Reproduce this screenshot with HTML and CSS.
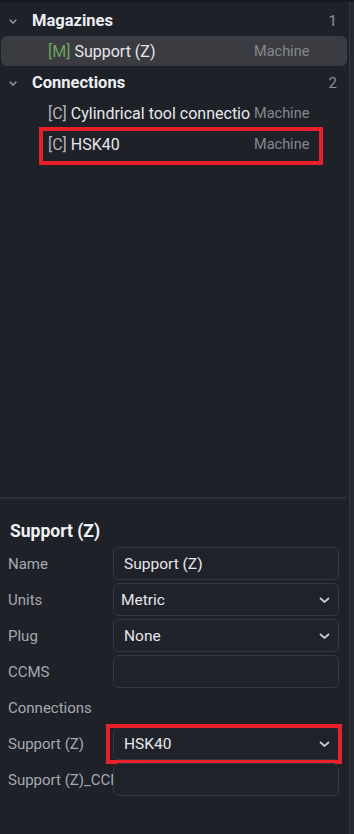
FILE: index.html
```html
<!DOCTYPE html>
<html>
<head>
<meta charset="utf-8">
<link rel="stylesheet" href="styles.css">
</head>
<body>
<div class="app">
  <div class="main">
    <div class="tree">
      <div class="group-row">
        <svg class="tchev" width="8" height="5" viewBox="0 0 8 5"><path d="M0.7 0.7 L4 4 L7.3 0.7" fill="none" stroke="#9b9da4" stroke-width="1.4"/></svg>
        <span class="group-name">Magazines</span>
        <span class="count">1</span>
      </div>
      <div class="item-row selected">
        <span class="item-name"><span class="tag-m">[M]</span> Support (Z)</span>
        <span class="owner">Machine</span>
      </div>
      <div class="group-row">
        <svg class="tchev" width="8" height="5" viewBox="0 0 8 5"><path d="M0.7 0.7 L4 4 L7.3 0.7" fill="none" stroke="#9b9da4" stroke-width="1.4"/></svg>
        <span class="group-name">Connections</span>
        <span class="count">2</span>
      </div>
      <div class="item-row">
        <span class="item-name"><span class="tag-c">[C]</span> Cylindrical tool connection</span>
        <span class="owner">Machine</span>
      </div>
      <div class="item-row marked">
        <span class="item-name"><span class="tag-c">[C]</span> HSK40</span>
        <span class="owner">Machine</span>
        <div class="redbox tree-box"></div>
      </div>
    </div>
    <div class="sep"></div>
    <div class="props">
      <div class="title">Support (Z)</div>
      <div class="prow">
        <span class="label">Name</span>
        <div class="field">Support (Z)</div>
      </div>
      <div class="prow">
        <span class="label">Units</span>
        <div class="field select metric">Metric<svg class="schev" width="11" height="6" viewBox="0 0 11 6"><path d="M1 1 L5.5 5 L10 1" fill="none" stroke="#c9cace" stroke-width="1.8"/></svg></div>
      </div>
      <div class="prow">
        <span class="label">Plug</span>
        <div class="field select">None<svg class="schev" width="11" height="6" viewBox="0 0 11 6"><path d="M1 1 L5.5 5 L10 1" fill="none" stroke="#c9cace" stroke-width="1.8"/></svg></div>
      </div>
      <div class="prow">
        <span class="label">CCMS</span>
        <div class="field"></div>
      </div>
      <div class="prow">
        <span class="label">Connections</span>
      </div>
      <div class="prow">
        <span class="label">Support (Z)</span>
        <div class="field select marked">HSK40<svg class="schev" width="11" height="6" viewBox="0 0 11 6"><path d="M1 1 L5.5 5 L10 1" fill="none" stroke="#c9cace" stroke-width="1.8"/></svg><div class="redbox field-box"></div></div>
      </div>
      <div class="prow">
        <span class="label">Support (Z)_CCMS</span>
        <div class="field"></div>
      </div>
    </div>
  </div>
  <div class="scroll"></div>
</div>
</body>
</html>
```

FILE: styles.css
```css
html, body {
  margin: 0;
  padding: 0;
  background: #1f2129;
}
body {
  width: 354px;
  height: 834px;
  overflow: hidden;
  font-family: Roboto, "Liberation Sans", sans-serif;
  font-size: 15px;
  color: #e4e5e8;
}
.app {
  display: flex;
  height: 834px;
  border-top: 2px solid #18191e;
  box-sizing: border-box;
}
.main {
  width: 349px;
  display: flex;
  flex-direction: column;
}
.scroll {
  width: 5px;
  background: #26282f;
  border-left: 1px solid #34363d;
  box-sizing: border-box;
}
.tree {
  height: 495px;
  padding-top: 3px;
  box-sizing: border-box;
}
.group-row {
  height: 31px;
  display: flex;
  align-items: center;
  padding-left: 9px;
  padding-right: 12px;
}
.tchev {
  margin-top: 1px;
  margin-right: 15px;
  flex: none;
}
.group-name {
  font-weight: 700;
  font-size: 16.5px;
  color: #eceef2;
  flex: 1;
}
.count {
  color: #8d8f95;
  font-size: 15px;
}
.item-row {
  position: relative;
  height: 31px;
  display: flex;
  align-items: center;
  padding-left: 48px;
}
.item-row.selected {
  height: 30px;
  margin: 0 2px 1px 1px;
  padding-left: 47px;
  background: #3b3c42;
  border-radius: 6px;
}
.item-name {
  width: 202px;
  margin-right: 4px;
  white-space: nowrap;
  overflow: hidden;
  color: #e6e7ea;
  font-size: 16px;
}
.tag-m {
  color: #6ea35c;
}
.tag-c {
  color: #b3b5ba;
}
.owner {
  color: #85878d;
  font-size: 14.5px;
}
.redbox {
  position: absolute;
  border: 4px solid #e8202a;
  box-sizing: border-box;
  pointer-events: none;
}
.tree-box {
  left: 39px;
  top: -2px;
  width: 284px;
  height: 38px;
}
.sep {
  height: 2px;
  width: 346px;
  background: #2d2f37;
}
.props {
  padding: 22px 0 0 8px;
}
.title {
  font-weight: 700;
  font-size: 17.5px;
  color: #f0f1f4;
  height: 21px;
  line-height: 21px;
  padding-left: 2px;
  margin-bottom: 5px;
}
.prow {
  display: flex;
  align-items: center;
  height: 33px;
  margin-bottom: 3px;
}
.label {
  width: 105px;
  flex: none;
  white-space: nowrap;
  overflow: hidden;
  color: #a6a8ae;
}
.field {
  position: relative;
  width: 226px;
  height: 33px;
  box-sizing: border-box;
  border: 1px solid #34373f;
  border-radius: 6px;
  background: #20222a;
  display: flex;
  align-items: center;
  padding-left: 10px;
  color: #e6e7ea;
  font-size: 15.5px;
}
.field.metric {
  padding-left: 7px;
}
.schev {
  margin-left: auto;
  margin-right: 8px;
}
.field-box {
  left: -8px;
  top: -4px;
  right: -4px;
  bottom: -5px;
}
```
